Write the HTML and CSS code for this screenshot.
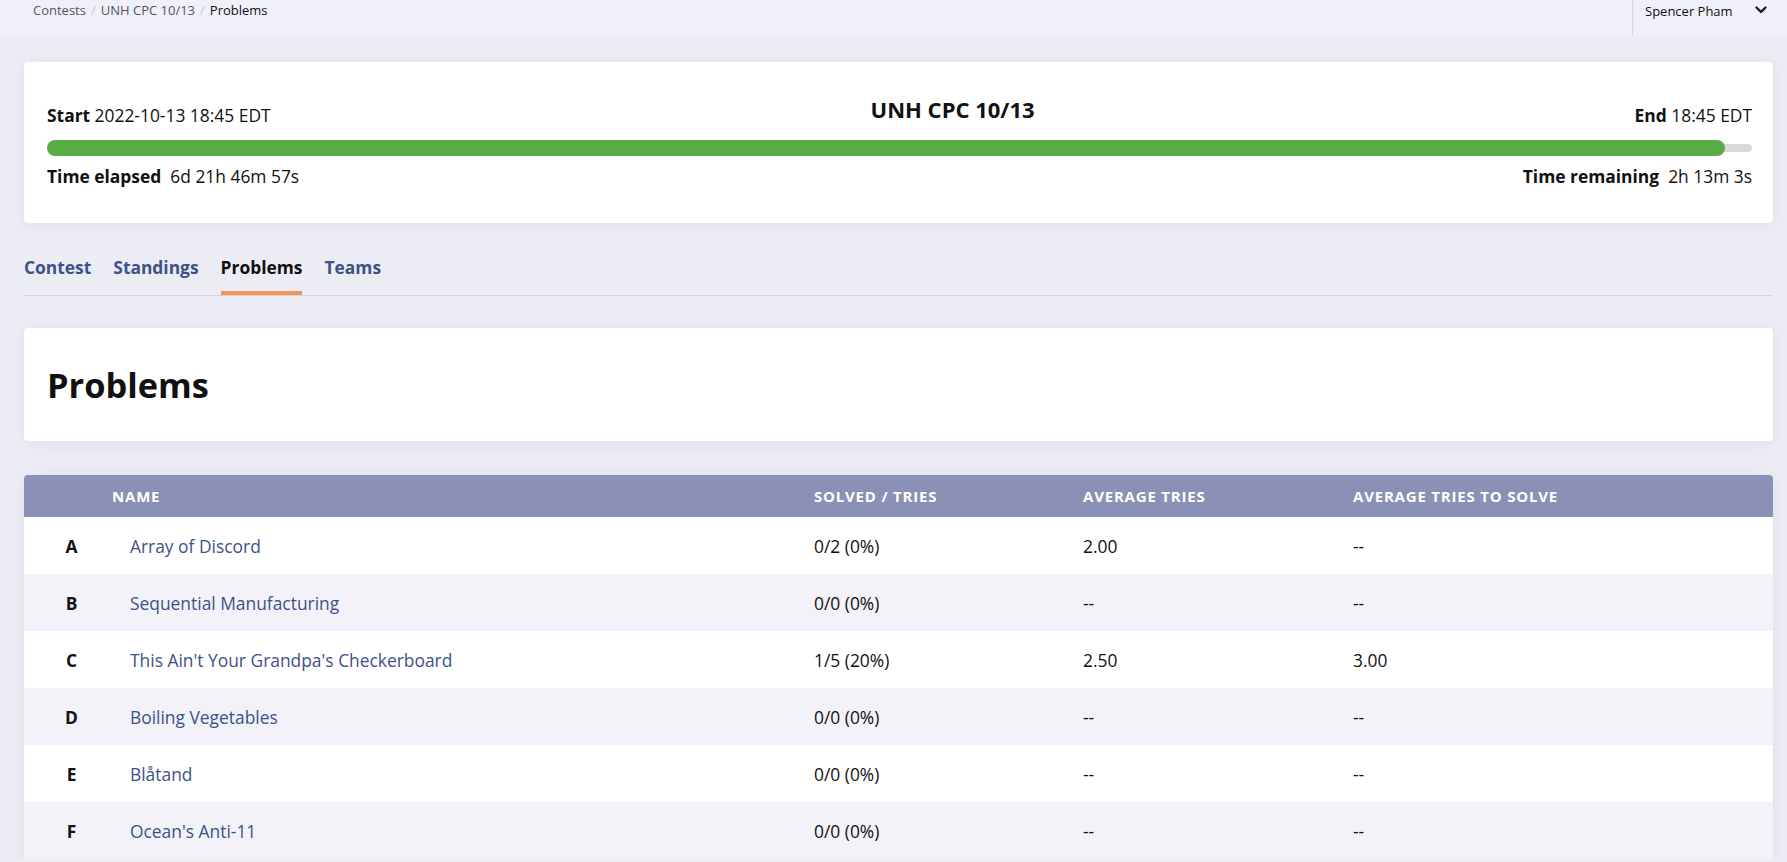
FILE: index.html
```html
<!DOCTYPE html>
<html lang="en">
<head>
<meta charset="utf-8">
<title>Problems - UNH CPC 10/13</title>
<link rel="stylesheet" href="styles.css">
</head>
<body>
<header class="topbar">
  <nav class="crumbs">
    <a class="crumb" href="#">Contests</a><span class="sep">/</span><a class="crumb" href="#">UNH CPC 10/13</a><span class="sep">/</span><span class="crumb-current">Problems</span>
  </nav>
  <div class="user">
    <span class="user-name">Spencer Pham</span>
    <svg class="chevron" width="12" height="8" viewBox="0 0 12 8"><path d="M1.5 1.5 L6 6 L10.5 1.5" fill="none" stroke="#111" stroke-width="2.2" stroke-linecap="round" stroke-linejoin="round"/></svg>
  </div>
</header>

<main class="page">
  <section class="card timer">
    <div class="timer-top">
      <div class="stamp"><b>Start</b> 2022-10-13 18:45 EDT</div>
      <h2 class="contest-title">UNH CPC 10/13</h2>
      <div class="stamp"><b>End</b> 18:45 EDT</div>
    </div>
    <div class="track"><div class="fill" style="width: 98.4%"></div></div>
    <div class="timer-bottom">
      <div class="stamp"><b>Time elapsed</b>&nbsp; 6d 21h 46m 57s</div>
      <div class="stamp"><b>Time remaining</b>&nbsp; 2h 13m 3s</div>
    </div>
  </section>

  <nav class="tabs">
    <a class="tab" href="#">Contest</a>
    <a class="tab" href="#">Standings</a>
    <a class="tab active" href="#">Problems</a>
    <a class="tab" href="#">Teams</a>
  </nav>

  <section class="card heading">
    <h1 class="page-title">Problems</h1>
  </section>

  <section class="table-card">
    <table class="problems">
      <colgroup>
        <col class="c-letter"><col class="c-name"><col class="c-solved"><col class="c-avg"><col class="c-ats">
      </colgroup>
      <thead>
        <tr><th></th><th>Name</th><th>Solved / Tries</th><th>Average Tries</th><th>Average Tries to Solve</th></tr>
      </thead>
      <tbody>
        <tr><td class="letter">A</td><td><a class="pname" href="#">Array of Discord</a></td><td>0/2 (0%)</td><td>2.00</td><td>--</td></tr>
        <tr><td class="letter">B</td><td><a class="pname" href="#">Sequential Manufacturing</a></td><td>0/0 (0%)</td><td>--</td><td>--</td></tr>
        <tr><td class="letter">C</td><td><a class="pname" href="#">This Ain't Your Grandpa's Checkerboard</a></td><td>1/5 (20%)</td><td>2.50</td><td>3.00</td></tr>
        <tr><td class="letter">D</td><td><a class="pname" href="#">Boiling Vegetables</a></td><td>0/0 (0%)</td><td>--</td><td>--</td></tr>
        <tr><td class="letter">E</td><td><a class="pname" href="#">Blåtand</a></td><td>0/0 (0%)</td><td>--</td><td>--</td></tr>
        <tr><td class="letter">F</td><td><a class="pname" href="#">Ocean's Anti-11</a></td><td>0/0 (0%)</td><td>--</td><td>--</td></tr>
      </tbody>
    </table>
  </section>
</main>
</body>
</html>
```

FILE: styles.css
```css
* { box-sizing: border-box; }

html, body {
  margin: 0;
  padding: 0;
}

body {
  background: #ececf4;
  font-family: "Open Sans", "Noto Sans", sans-serif;
  color: #111;
  overflow: hidden;
}

a { text-decoration: none; }

.topbar {
  height: 36px;
  background: #f0f0fa;
  display: flex;
  justify-content: space-between;
  align-items: stretch;
}

.crumbs {
  padding-left: 33px;
  font-size: 13px;
  line-height: 20px;
  display: flex;
  align-items: flex-start;
}

.crumb { color: #555; }
.crumb-current { color: #111; }
.sep { color: #c8c8cc; margin: 0 5px; }

.user {
  width: 155px;
  border-left: 1px solid #d8d8e0;
  display: flex;
  align-items: flex-start;
  justify-content: space-between;
  padding: 0 20px 0 12px;
}

.user-name {
  font-size: 13px;
  line-height: 22px;
  color: #111;
}

.chevron { margin-top: 6px; }

.page {
  margin: 0 14px 0 24px;
}

.card {
  background: #fff;
  border-radius: 4px;
  box-shadow: 0 2px 18px rgba(40, 40, 90, 0.06);
}

.timer {
  margin-top: 26px;
  height: 161px;
  padding: 33px 21px 0 23px;
}

.timer-top {
  display: flex;
  justify-content: space-between;
  align-items: flex-start;
}

.timer-top .stamp { margin-top: 8px; }

.stamp {
  font-size: 17.4px;
  line-height: 24px;
  white-space: nowrap;
}

.stamp b { font-weight: 700; }

.contest-title {
  margin: 0;
  font-size: 22px;
  font-weight: 700;
  line-height: 28px;
}

.track {
  margin-top: 17px;
  height: 8px;
  background: #d9d9d9;
  border-radius: 4px;
  position: relative;
}

.fill {
  position: absolute;
  left: 0;
  top: -4px;
  height: 16px;
  background: #58ad46;
  border-radius: 8px;
}

.timer-bottom {
  margin-top: 12px;
  display: flex;
  justify-content: space-between;
}

.tabs {
  margin-top: 33px;
  display: flex;
  gap: 22px;
  border-bottom: 1px solid #d4d4dc;
}

.tab {
  font-size: 17.4px;
  font-weight: 700;
  color: #3d5288;
  line-height: 22px;
  padding-bottom: 13px;
  border-bottom: 4px solid transparent;
}

.tab.active {
  color: #111;
  border-bottom-color: #ef965a;
}

.heading {
  margin-top: 32px;
  height: 113px;
  padding: 0 23px;
  display: flex;
  align-items: center;
}

.page-title {
  margin: 0;
  font-size: 34.4px;
  font-weight: 700;
}

.table-card {
  margin-top: 34px;
  border-radius: 4px 4px 0 0;
  overflow: hidden;
  background: #fff;
  box-shadow: 0 2px 18px rgba(40, 40, 90, 0.06);
}

.problems {
  width: 100%;
  border-collapse: collapse;
  table-layout: fixed;
}

.c-letter { width: 88px; }
.c-name { width: 702px; }
.c-solved { width: 269px; }
.c-avg { width: 270px; }

.problems th {
  background: #8b90b6;
  color: #fff;
  height: 42px;
  text-align: left;
  font-size: 15px;
  letter-spacing: 0.8px;
  font-weight: 700;
  text-transform: uppercase;
  padding: 0;
}

.problems td {
  height: 57px;
  padding: 0;
  font-size: 17.4px;
  color: #111;
}

.problems tbody tr:nth-child(even) td { background: #f2f2f8; }

.letter {
  text-align: center;
  font-weight: 700;
  padding-left: 7px !important;
}

.pname {
  color: #3d5288;
  padding-left: 18px;
}
```
